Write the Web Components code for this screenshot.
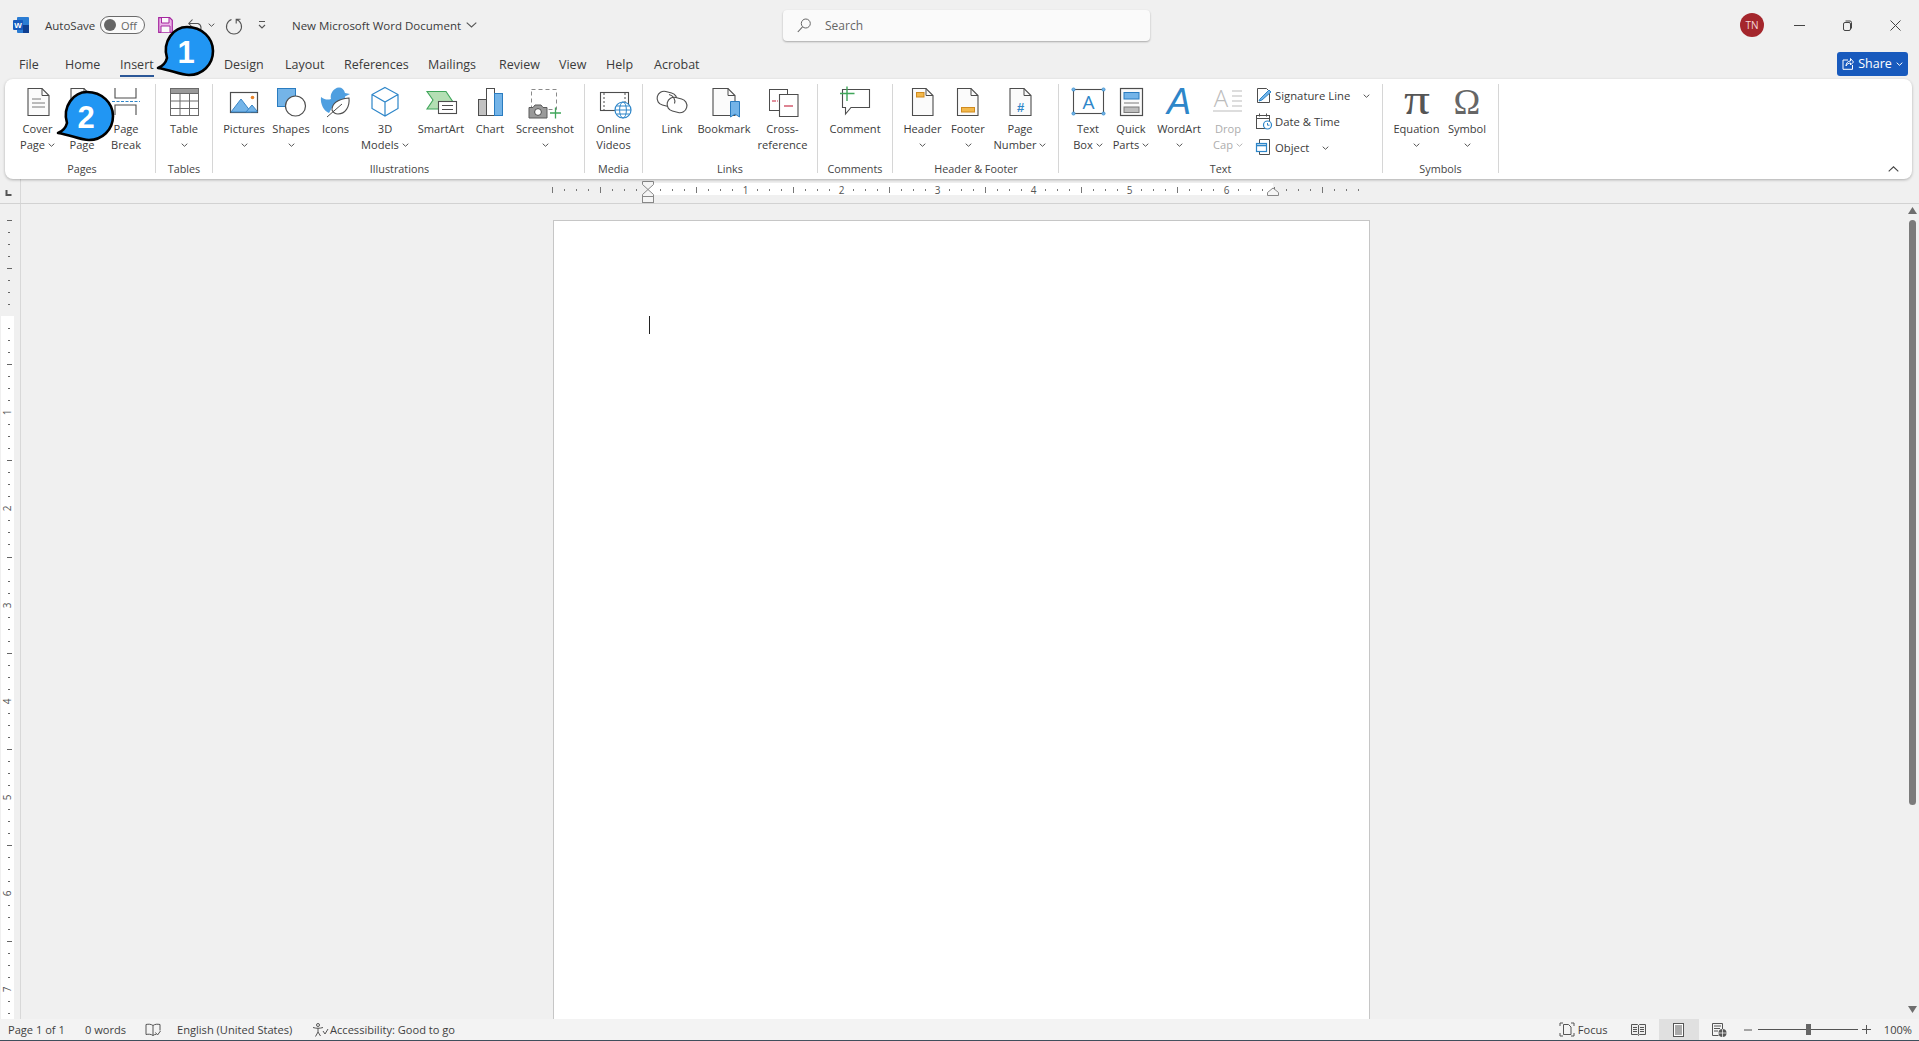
<!DOCTYPE html>
<html lang="en">
<head>
<meta charset="utf-8">
<title>New Microsoft Word Document</title>
<style>
  html, body { margin: 0; height: 100%; overflow: hidden; background: #f0f0f0; }
  body { font-family: "Open Sans", "Liberation Sans", sans-serif; color: #3b3b3b; }
</style>
</head>
<body>
<word-app>
  <title-bar></title-bar>
  <tab-strip></tab-strip>
  <ribbon-bar>
    <ribbon-group label="Pages" pad="10 7" shift="4">
      <ribbon-button w="45" icon="cover" label="Cover|Page" arrow></ribbon-button>
      <ribbon-button w="44" icon="blank" label=" |Page"></ribbon-button>
      <ribbon-button w="44" icon="pagebreak" label="Page|Break"></ribbon-button>
    </ribbon-group>
    <ribbon-group label="Tables" pad="0 0">
      <ribbon-button w="56" icon="table" label="Table" arrow></ribbon-button>
    </ribbon-group>
    <ribbon-group label="Illustrations" pad="5 3" shift="2">
      <ribbon-button w="52" icon="pictures" label="Pictures" arrow></ribbon-button>
      <ribbon-button w="42" icon="shapes" label="Shapes" arrow></ribbon-button>
      <ribbon-button w="47" icon="icons" label="Icons"></ribbon-button>
      <ribbon-button w="52" icon="models" label="3D|Models" arrow></ribbon-button>
      <ribbon-button w="60" icon="smartart" label="SmartArt"></ribbon-button>
      <ribbon-button w="38" icon="chart" label="Chart"></ribbon-button>
      <ribbon-button w="72" icon="screenshot" label="Screenshot" arrow></ribbon-button>
    </ribbon-group>
    <ribbon-group label="Media" pad="0 0">
      <ribbon-button w="57" icon="video" label="Online|Videos"></ribbon-button>
    </ribbon-group>
    <ribbon-group label="Links" pad="1 0">
      <ribbon-button w="56" icon="link" label="Link"></ribbon-button>
      <ribbon-button w="48" icon="bookmark" label="Bookmark"></ribbon-button>
      <ribbon-button w="69" icon="crossref" label="Cross-|reference"></ribbon-button>
    </ribbon-group>
    <ribbon-group label="Comments" pad="0 0">
      <ribbon-button w="74" icon="comment" label="Comment"></ribbon-button>
    </ribbon-group>
    <ribbon-group label="Header &amp; Footer" pad="1 3" shift="1">
      <ribbon-button w="57" icon="header" label="Header" arrow></ribbon-button>
      <ribbon-button w="34" icon="footer" label="Footer" arrow></ribbon-button>
      <ribbon-button w="70" icon="pagenum" label="Page|Number" arrow></ribbon-button>
    </ribbon-group>
    <ribbon-group label="Text" pad="2 0">
      <ribbon-button w="54" icon="textbox" label="Text|Box" arrow></ribbon-button>
      <ribbon-button w="32" icon="quickparts" label="Quick|Parts" arrow></ribbon-button>
      <ribbon-button w="64" icon="wordart" label="WordArt" arrow></ribbon-button>
      <ribbon-button w="34" icon="dropcap" label="Drop|Cap" arrow disabled></ribbon-button>
      <small-stack>
        <small-button icon="signature" label="Signature Line" arrow-at="88"></small-button>
        <small-button icon="datetime" label="Date &amp; Time"></small-button>
        <small-button icon="object" label="Object" arrow-at="47"></small-button>
      </small-stack>
    </ribbon-group>
    <ribbon-group label="Symbols" pad="7 7">
      <ribbon-button w="53" icon="equation" label="Equation" arrow></ribbon-button>
      <ribbon-button w="48" icon="symbol" label="Symbol" arrow></ribbon-button>
    </ribbon-group>
  </ribbon-bar>
  <h-ruler></h-ruler>
  <doc-area></doc-area>
  <status-bar></status-bar>
</word-app>
<callout-badge n="1" x="156" y="25"></callout-badge>
<callout-badge n="2" x="56" y="90"></callout-badge>

<script>
  const INK = "#4d4d4d";
  const BLUE = "#2e86c9";
  const SKY = "#74b4e8";
  const ORANGE = "#f2b84b";

  const doc = (x0, x1, y0 = 4.5, y1 = 31.5, fold = 7) =>
    `<path d="M${x0} ${y0}H${x1 - fold}L${x1} ${y0 + fold}V${y1}H${x0}Z" fill="#fbfbfb" stroke="${INK}" stroke-width="1.1"/>
     <path d="M${x1 - fold} ${y0}V${y0 + fold}H${x1}" fill="none" stroke="${INK}"/>`;

  // svg bodies for the large ribbon buttons, 44x37, x=22 is the button centre
  const ICONS = {
    cover: doc(12, 33) + `<path d="M16 15h9M16 19h13M16 23h13" stroke="#7a7a7a" fill="none"/>`,
    blank: doc(11, 31),
    pagebreak: `<path d="M11 4v10h21V4M11 31V21h21v10" fill="none" stroke="${INK}" stroke-width="1.1"/>
      <path d="M8 17.5h28" stroke="${BLUE}" stroke-dasharray="3 1.5" stroke-width="1.2"/>`,
    table: `<rect x="8.5" y="4.5" width="28" height="27" fill="#fff" stroke="#6a6a6a"/>
      <rect x="8.5" y="4.5" width="28" height="5" fill="#9a9a9a" stroke="#6a6a6a"/>
      <path d="M18 9.5v22M27.5 9.5v22M8.5 17h28M8.5 24.5h28" stroke="#6a6a6a" fill="none"/>`,
    pictures: `<rect x="8.5" y="8.5" width="27" height="20" fill="#fff" stroke="${INK}" stroke-width="1.2"/>
      <path d="M9 28L19 15L29 28Z" fill="${SKY}" stroke="#3a86c6"/><path d="M24 28L30 21L35 27V28Z" fill="${SKY}" stroke="#3a86c6"/>
      <circle cx="30.5" cy="13.5" r="1.8" fill="#e8832a"/>`,
    shapes: `<rect x="8.5" y="4.5" width="18" height="18" fill="${SKY}" stroke="#2a7cc0"/>
      <circle cx="26.5" cy="22" r="10" fill="#fff" stroke="${INK}" stroke-width="1.2"/>`,
    icons: `<path d="M7 13C11 16 14 16 17 15C16 11 18 7 21 5C25 2 30 4 31 9L36 10L31 12.500C31 16 30 19 27 21L19 22L15 29C10 27 6 20 7 13Z" fill="#4f9fe0"/>
      <path d="M18 26C18 19 25 15 35 14C36 23 31 30 24 30C21 30 19 28 18 26Z" fill="#fff" stroke="${INK}" stroke-width="1.1"/>
      <path d="M13 33L28 20" stroke="${INK}"/>`,
    models: `<path d="M22 3.500L35 10.500V24.500L22 32L9 24.500V10.500Z M9 10.500L22 18L35 10.500M22 18V32" fill="#fff" stroke="${BLUE}" stroke-width="1.2"/>`,
    smartart: `<path d="M8 7.500H27L34 18L27 25H8L14 16Z" fill="#b4dfb4" stroke="#3fa65a" stroke-width="1.1"/>
      <rect x="19.500" y="17.500" width="18" height="12" fill="#fff" stroke="${INK}" stroke-width="1.1"/>
      <path d="M23 21.500h11M23 25.500h11" stroke="${INK}"/>`,
    chart: `<rect x="10.500" y="15.500" width="8" height="16" fill="#c2c2c2" stroke="${INK}"/>
      <rect x="18.500" y="4.500" width="8" height="27" fill="#fff" stroke="${INK}"/>
      <rect x="26.500" y="9.500" width="8" height="22" fill="${SKY}" stroke="#2a7cc0"/>`,
    screenshot: `<rect x="8.500" y="5.500" width="25" height="20" fill="none" stroke="#8a8a8a" stroke-dasharray="4 3"/>
      <path d="M6 23.500h4l2-2.500h6l2 2.500h4v10.500H6Z" fill="#9a9a9a" stroke="#5a5a5a"/>
      <circle cx="15" cy="28" r="3.400" fill="#fff" stroke="#4a4a4a"/>
      <path d="M27 29h11M32.500 23.500v11" stroke="#3fa65a" stroke-width="1.300"/>`,
    video: `<rect x="8.500" y="8.500" width="28" height="18" fill="#fff" stroke="${INK}" stroke-width="1.100"/>
      <path d="M12 9v17M33 9v17" stroke="${INK}" stroke-dasharray="2 2"/>
      <circle cx="31" cy="26" r="8" fill="#fff" stroke="${BLUE}" stroke-width="1.200"/>
      <ellipse cx="31" cy="26" rx="3.400" ry="8" fill="none" stroke="${BLUE}"/><path d="M23 26h16M24.500 22h13M24.500 30h13" stroke="${BLUE}"/>`,
    link: `<rect x="7" y="8" width="20" height="14" rx="7" fill="none" stroke="${INK}" stroke-width="1.100" transform="rotate(14 17 15)"/>
      <rect x="17" y="14" width="20" height="14" rx="7" fill="#fff" stroke="${INK}" stroke-width="1.100" transform="rotate(14 27 21)"/>
      <path d="M19 10.500a7 7 0 0 1 5.500 9" fill="none" stroke="${INK}" stroke-width="1.100"/>`,
    bookmark: doc(11, 33) + `<path d="M28.500 17.500h9v15.500l-4.500-3-4.500 3Z" fill="${SKY}" stroke="#2a7cc0"/>`,
    crossref: `<rect x="8.500" y="5.500" width="18" height="21" fill="#fff" stroke="${INK}"/>
      <path d="M11 17h4" stroke="#c8324a" stroke-width="1.100"/>
      <path d="M18.500 10.500H37V32.500H18.500Z" fill="#fff" stroke="${INK}" stroke-width="1.100"/>
      <path d="M23 22h9" stroke="#c8324a" stroke-width="1.200"/><path d="M16 17h1" stroke="#c8324a"/>`,
    comment: `<path d="M9.500 5.500H36.500V23.500H18L12.500 30V23.500H9.500Z" fill="#fff" stroke="${INK}" stroke-width="1.100"/>
      <path d="M7 9.500h14.500M14 2.500v14.500" stroke="#3fa65a" stroke-width="1.400"/>`,
    header: doc(11.5, 32) + `<rect x="15.500" y="8.500" width="7.500" height="4.500" fill="${ORANGE}" stroke="#d08a1e"/>`,
    footer: doc(11.5, 32) + `<rect x="15.500" y="23.500" width="13" height="4.500" fill="${ORANGE}" stroke="#d08a1e"/>`,
    pagenum: doc(12, 33) + `<text x="22.500" y="28" text-anchor="middle" font-family="Liberation Sans" font-size="13" font-weight="700" fill="${BLUE}">#</text>`,
    textbox: `<rect x="7.500" y="5.500" width="30" height="24" fill="#fff" stroke="${INK}" stroke-width="1.100"/>
      ${[[7.5, 5.5], [37.5, 5.5], [7.5, 29.5], [37.5, 29.5]].map(([x, y]) => `<circle cx="${x}" cy="${y}" r="1.600" fill="${SKY}" stroke="${BLUE}" stroke-width=".7"/>`).join("")}
      <text x="22.500" y="25" text-anchor="middle" font-family="Open Sans" font-size="19" fill="${BLUE}">A</text>`,
    quickparts: `<rect x="11.500" y="4.500" width="22" height="27" fill="#fafafa" stroke="${INK}" stroke-width="1.200"/>
      <rect x="15" y="8.500" width="15" height="6.500" fill="${SKY}" stroke="#2a7cc0"/>
      <path d="M15 19h15" stroke="#7a7a7a"/><rect x="15" y="23" width="15" height="5.500" fill="#bdbdbd" stroke="#7a7a7a"/>`,
    wordart: `<text x="22" y="29.500" text-anchor="middle" font-family="Liberation Sans" font-style="italic" font-size="36" fill="${BLUE}">A</text>`,
    dropcap: `<text x="15" y="23" text-anchor="middle" font-family="Open Sans" font-weight="300" font-size="24" fill="#bcbcbc">A</text>
      <path d="M26 7h10M26 12h10M26 17h10M26 22h10M7 27h29" stroke="#bcbcbc" stroke-width="1.100"/>`,
    equation: `<text x="22" y="30" text-anchor="middle" font-family="Liberation Serif" font-size="44" textLength="26" lengthAdjust="spacingAndGlyphs" fill="#555">π</text>`,
    symbol: `<text x="22" y="30" text-anchor="middle" font-family="Liberation Serif" font-size="36" fill="#666">Ω</text>`,
  };

  // 18x18 icons of the small ribbon buttons
  const SMALL_ICONS = {
    signature: `<path d="M2.500 2.500h9l3 3v11h-12Z" fill="#fff" stroke="${INK}"/><path d="M5 13L14 4l2 2-9 8-3 1Z" fill="${SKY}" stroke="${BLUE}"/>`,
    datetime: `<rect x="1.500" y="3.500" width="13" height="13" fill="#fff" stroke="${INK}"/><path d="M1.500 6.500h13M4.500 1.500v3M11.500 1.500v3" stroke="${INK}"/><circle cx="12.500" cy="13" r="4" fill="#fff" stroke="${BLUE}" stroke-width="1.200"/><path d="M12.500 11v2.200h2" stroke="${BLUE}" fill="none"/>`,
    object: `<path d="M4.500 1.500h10v15h-10Z" fill="#fff" stroke="${INK}"/><rect x="1.500" y="5.500" width="10" height="8" fill="#fff" stroke="${BLUE}" stroke-width="1.200"/><path d="M1.500 7.500h10" stroke="${BLUE}" stroke-width="1.600"/>`,
  };

  const chevron = (color = "#555") =>
    `<svg width="7" height="4" viewBox="0 0 7 4" style="vertical-align:middle"><path d="M.7.7L3.500 3.300 6.300.7" fill="none" stroke="${color}" stroke-width="1"/></svg>`;

  class WordApp extends HTMLElement {
    constructor() {
      super();
      this.attachShadow({ mode: "open" }).innerHTML = `
        <style>:host { display: flex; flex-direction: column; width: 1919px; height: 1041px; background: #f0f0f0; }</style>
        <slot></slot>`;
    }
  }

  class TitleBar extends HTMLElement {
    constructor() {
      super();
      this.attachShadow({ mode: "open" }).innerHTML = `
        <style>
          :host { display: flex; align-items: center; height: 50px; flex: none; font-size: 11.5px; color: #3b3b3b; }
          .left { width: 783px; flex: none; display: flex; align-items: center; padding-left: 13px; box-sizing: border-box; }
          svg { display: block; flex: none; }
          .auto { margin-left: 16px; width: 48px; white-space: nowrap; }
          .toggle { margin-left: 7px; width: 45px; height: 18px; box-sizing: border-box; border: 1px solid #6a6a6a; border-radius: 9px; background: #fafafa; display: flex; align-items: center; padding-left: 3px; font-size: 11px; color: #666; gap: 5px; }
          .knob { width: 12px; height: 12px; border-radius: 50%; background: #666; }
          .doc { margin-left: 25px; width: 174px; white-space: nowrap; }
          .search { width: 367px; height: 31px; flex: none; box-sizing: border-box; background: #fafafa; border-radius: 4px; box-shadow: 0 1px 2px rgba(0,0,0,.3); display: flex; align-items: center; padding-left: 14px; gap: 14px; color: #666; font-size: 12px; }
          .right { flex: 1; display: flex; align-items: center; justify-content: flex-end; padding-right: 18px; }
          .avatar { width: 24px; height: 24px; border-radius: 50%; background: #a4262c; color: #f3d6d6; font-size: 10px; display: flex; align-items: center; justify-content: center; margin-right: 30px; }
        </style>
        <div class="left">
          <svg width="16" height="16" viewBox="0 0 16 16"><rect x="4" width="12" height="16" rx="1" fill="#2b7cd3"/><rect x="10" y="8" width="6" height="8" fill="#103f91"/><rect y="3" width="10" height="10" rx="1" fill="#185abd"/><text x="5" y="11" text-anchor="middle" font-family="Liberation Sans" font-weight="700" font-size="8" fill="#fff">W</text></svg>
          <span class="auto">AutoSave</span>
          <span class="toggle"><span class="knob"></span>Off</span>
          <svg style="margin-left:13px" width="15" height="16" viewBox="0 0 15 16"><path d="M.7.7h11l2.600 2.600v12H.7Z" fill="#eab4e6" stroke="#a5279f" stroke-width="1.200"/><path d="M3.500 1v5h7.500V1M3 15.300V9h9v6.300" fill="#fafafa" stroke="#a5279f"/></svg>
          <svg style="margin-left:15px" width="17" height="16" viewBox="0 0 17 16"><path d="M1 6.500h9a4.500 4.500 0 0 1 0 8.500H7M4.500 2.500L.8 6.500l3.700 4" fill="none" stroke="#555" stroke-width="1.100"/></svg>
          <span style="margin-left:3px;width:8px;display:flex">${chevron()}</span>
          <svg style="margin-left:9px;overflow:visible" width="16" height="17" viewBox="0 0 16 17"><path d="M4.500 1.500a7.500 7.500 0 1 0 5 0M4.800 5.500v-4.300h-4.300" transform="matrix(-1 0 0 1 16 1)" fill="none" stroke="#555" stroke-width="1.100"/></svg>
          <svg style="margin-left:16px" width="10" height="10" viewBox="0 0 10 10"><path d="M2 1.500h6M2 5l3 3 3-3" fill="none" stroke="#555" stroke-width="1.100"/></svg>
          <span class="doc">New Microsoft Word Document</span>
          <svg width="11" height="6" viewBox="0 0 11 6"><path d="M.7.7L5.500 5 10.300.7" fill="none" stroke="#555" stroke-width="1.100"/></svg>
        </div>
        <div class="search">
          <svg width="14" height="15" viewBox="0 0 14 15"><circle cx="8.800" cy="5.500" r="4.500" fill="none" stroke="#666"/><path d="M5.500 8.800L.8 14" stroke="#666" stroke-width="1.100"/></svg>
          <span>Search</span>
        </div>
        <div class="right">
          <span class="avatar">TN</span>
          <svg width="11" height="11" viewBox="0 0 11 11"><path d="M0 5.500h11" stroke="#444"/></svg>
          <svg style="margin-left:37px" width="11" height="11" viewBox="0 0 11 11"><rect x="1.500" y="2.500" width="7" height="8" rx="1.500" fill="none" stroke="#444"/><path d="M3.500 1h4.500a1.500 1.500 0 0 1 1.500 1.500v6" fill="none" stroke="#444"/></svg>
          <svg style="margin-left:37px" width="11" height="11" viewBox="0 0 11 11"><path d="M.5.500l10 10M10.500.500l-10 10" stroke="#444"/></svg>
        </div>`;
    }
  }

  const TABS = [
    ["File", 46], ["Home", 55], ["Insert", 104, true], ["Design", 61], ["Layout", 59], ["References", 84],
    ["Mailings", 71], ["Review", 60], ["View", 47], ["Help", 48], ["Acrobat", 60],
  ];

  class TabStrip extends HTMLElement {
    constructor() {
      super();
      const tabs = TABS.map(([name, w, on]) =>
        `<span class="tab${on ? " on" : ""}" style="width:${w}px"><b>${name}</b></span>`).join("");
      this.attachShadow({ mode: "open" }).innerHTML = `
        <style>
          :host { display: flex; align-items: center; height: 29px; flex: none; padding-left: 19px; font-size: 12.5px; color: #3b3b3b; position: relative; box-sizing: border-box; }
          .tab { flex: none; white-space: nowrap; }
          b { font-weight: 400; position: relative; display: inline-block; line-height: 29px; }
          .on b::after { content: ""; position: absolute; left: 0; right: 0; bottom: 2px; height: 2px; background: #2b5797; }
          .share { margin-left: auto; margin-right: 11px; width: 71px; height: 24px; margin-top: -2px; background: #185abd; border-radius: 3px; color: #fff; display: flex; align-items: center; justify-content: center; gap: 4px; }
          .share svg { flex: none; }
        </style>
        ${tabs}
        <span class="share">
          <svg width="12" height="13" viewBox="0 0 12 13"><path d="M6 3H1v9.300h9.500V8" fill="none" stroke="#fff"/><path d="M4 9c0-3 2-5 4.500-5V1.500L11.500 5 8.500 8V6C6.500 6 5 7 4 9Z" fill="none" stroke="#fff"/></svg>
          Share ${chevron("#fff")}
        </span>`;
    }
  }

  class RibbonBar extends HTMLElement {
    constructor() {
      super();
      this.attachShadow({ mode: "open" }).innerHTML = `
        <style>
          :host { display: flex; flex: none; height: 100px; margin: 0 7px 0 5px; padding-top: 5px; box-sizing: border-box; background: #fff; border-radius: 8px; box-shadow: 0 1px 3px rgba(0,0,0,.28); position: relative; z-index: 1; }
          .collapse { margin-left: auto; margin-right: 13px; align-self: flex-end; margin-bottom: 7px; }
        </style>
        <slot></slot>
        <svg class="collapse" width="11" height="6" viewBox="0 0 11 6"><path d="M.7 5.300L5.500 .8l4.800 4.500" fill="none" stroke="#444" stroke-width="1.100"/></svg>`;
    }
  }

  class RibbonGroup extends HTMLElement {
    constructor() {
      super();
      const [l, r] = (this.getAttribute("pad") || "0 0").split(" ");
      this.attachShadow({ mode: "open" }).innerHTML = `
        <style>
          :host { display: flex; flex-direction: column; flex: none; height: 89px; border-right: 1px solid #d6d6d6; box-sizing: content-box; }
          .body { display: flex; flex: 1; padding: 0 ${r}px 0 ${l}px; }
          .name { height: 12px; line-height: 12px; margin-bottom: -2px; padding-left: ${this.getAttribute("shift") || 0}px; text-align: center; font-size: 10.8px; color: #444; white-space: nowrap; }
        </style>
        <div class="body"><slot></slot></div>
        <div class="name"></div>`;
      this.shadowRoot.querySelector(".name").textContent = this.getAttribute("label");
    }
  }

  class RibbonButton extends HTMLElement {
    constructor() {
      super();
      const lines = this.getAttribute("label").split("|");
      const arrow = this.hasAttribute("arrow");
      const off = this.hasAttribute("disabled");
      const chev = chevron(off ? "#b5b5b5" : "#555");
      const rows = lines.map((t, i) =>
        `<div class="row">${t.trim() ? t : "&nbsp;"}${arrow && i === lines.length - 1 && lines.length > 1 ? " " + chev : ""}</div>`).join("");
      this.attachShadow({ mode: "open" }).innerHTML = `
        <style>
          :host { display: block; flex: none; width: ${this.getAttribute("w")}px; font-size: 11.1px; color: ${off ? "#adadad" : "#3b3b3b"}; }
          svg.ico { display: block; width: 44px; height: 37px; overflow: visible; position: relative; left: 50%; transform: translateX(-50%); margin: 0; }
          .row { height: 16px; line-height: 16px; text-align: center; white-space: nowrap; display: flex; justify-content: center; align-items: center; gap: 3px; }
          .row svg { flex: none; }
          .wrap { width: 100%; }
        </style>
        <svg class="ico" viewBox="0 0 44 37">${ICONS[this.getAttribute("icon")]}</svg>
        <div class="wrap">${rows}${arrow && lines.length === 1 ? `<div class="row">${chev}</div>` : ""}</div>`;
    }
  }

  class SmallStack extends HTMLElement {
    constructor() {
      super();
      this.attachShadow({ mode: "open" }).innerHTML = `
        <style>:host { display: flex; flex-direction: column; flex: none; width: 127px; margin: -2px 0 0 10px; }</style>
        <slot></slot>`;
    }
  }

  class SmallButton extends HTMLElement {
    constructor() {
      super();
      const at = this.getAttribute("arrow-at");
      this.attachShadow({ mode: "open" }).innerHTML = `
        <style>
          :host { display: flex; align-items: center; height: 26px; font-size: 11.3px; color: #3b3b3b; white-space: nowrap; }
          svg.ico { flex: none; width: 18px; height: 18px; margin-right: 2px; }
          .t { display: inline-block; }
        </style>
        <svg class="ico" viewBox="0 0 18 18">${SMALL_ICONS[this.getAttribute("icon")]}</svg>
        <span class="t"></span>
        ${at ? `<span style="position:absolute;margin-left:${+at + 20}px">${chevron()}</span>` : ""}`;
      this.shadowRoot.querySelector(".t").textContent = this.getAttribute("label");
    }
  }

  class HRuler extends HTMLElement {
    constructor() {
      super();
      const zero = 648.3, inch = 96.2;
      let marks = "";
      for (let n = -8; n <= 59; n++) {
        const x = Math.round(zero + (n * inch) / 8) + 0.5;
        if (n === 0) continue;
        if (n % 8 === 0 && n > 0 && n < 56) marks += `<text x="${x}" y="194" text-anchor="middle">${n / 8}</text>`;
        else if (n % 4 === 0) marks += `<path d="M${x} 187v6" stroke="#777"/>`;
        else marks += `<path d="M${x} 189v2" stroke="#777"/>`;
      }
      this.attachShadow({ mode: "open" }).innerHTML = `
        <style>
          :host { display: block; flex: none; height: 25px; border-bottom: 1px solid #d2d2d2; box-sizing: border-box; }
          svg { display: block; }
          text { font: 10px "Open Sans", sans-serif; fill: #555; }
        </style>
        <svg width="1919" height="24" viewBox="0 179 1919 24">
          <rect x="648" y="183" width="625" height="12" fill="#fff"/>
          ${marks}
          <path d="M6.500 190v5h5" fill="none" stroke="#555" stroke-width="2"/>
          <path d="M20.500 179v24" stroke="#d8d8d8"/>
          <path d="M642.500 181.500h11v3l-5.500 5-5.500-5ZM642.500 196.500v-2l5.500-5 5.500 5v2Z" fill="#f5f5f5" stroke="#888"/>
          <rect x="642.500" y="196.500" width="11" height="6" fill="#f5f5f5" stroke="#888"/>
          <path d="M1267.500 195.500v-3l5.500-4.500 5.500 4.500v3Z" fill="#f5f5f5" stroke="#888"/>
        </svg>`;
    }
  }

  class VRuler extends HTMLElement {
    constructor() {
      super();
      const zero = 316, inch = 96.2;
      let marks = "";
      for (let n = -8; n <= 58; n++) {
        const y = Math.round(zero + (n * inch) / 8) + 0.5 - 204;
        if (n === 0) continue;
        if (n % 8 === 0 && n > 0) marks += `<text x="0" y="0" transform="translate(11 ${y}) rotate(-90)" text-anchor="middle">${n / 8}</text>`;
        else if (n % 4 === 0) marks += `<path d="M7 ${y}h5" stroke="#666"/>`;
        else marks += `<path d="M8 ${y}h2" stroke="#666"/>`;
      }
      this.attachShadow({ mode: "open" }).innerHTML = `
        <style>
          :host { display: block; flex: none; width: 21px; border-right: 1px solid #d8d8d8; box-sizing: border-box; overflow: hidden; }
          svg { display: block; }
          text { font: 10px "Open Sans", sans-serif; fill: #555; }
        </style>
        <svg width="20" height="815">
          <rect x="1" y="112" width="13" height="703" fill="#fff"/>
          ${marks}
        </svg>`;
    }
  }

  class DocArea extends HTMLElement {
    constructor() {
      super();
      this.attachShadow({ mode: "open" }).innerHTML = `
        <style>
          :host { display: flex; flex: 1; min-height: 0; }
          .canvas { flex: 1; display: flex; justify-content: center; padding: 16px 0 0 0; overflow: hidden; box-sizing: border-box; }
          .shift { margin-left: -4px; width: 817px; flex: none; }
          doc-page { display: block; }
        </style>
        <v-ruler></v-ruler>
        <div class="canvas"><div class="shift"><doc-page></doc-page></div></div>
        <v-scrollbar></v-scrollbar>`;
    }
  }

  class DocPage extends HTMLElement {
    constructor() {
      super();
      this.attachShadow({ mode: "open" }).innerHTML = `
        <style>
          :host { display: block; height: 900px; box-sizing: border-box; background: #fff; border: 1px solid #c6c6c6; padding: 95px 0 0 95px; }
          .caret { width: 1px; height: 18px; background: #222; }
        </style>
        <div class="caret"></div>`;
    }
  }

  class VScrollbar extends HTMLElement {
    constructor() {
      super();
      this.attachShadow({ mode: "open" }).innerHTML = `
        <style>
          :host { display: flex; flex-direction: column; align-items: center; flex: none; width: 14px; padding-top: 3px; box-sizing: border-box; }
          .thumb { width: 7px; height: 585px; border-radius: 4px; background: #7b7b7b; margin-top: 6px; }
          svg { display: block; flex: none; }
          .down { margin-top: auto; margin-bottom: 6px; }
        </style>
        <svg width="9" height="7" viewBox="0 0 9 7"><path d="M0 7L4.500 0 9 7Z" fill="#6e6e6e"/></svg>
        <div class="thumb"></div>
        <svg class="down" width="9" height="7" viewBox="0 0 9 7"><path d="M0 0L4.500 7 9 0Z" fill="#6e6e6e"/></svg>`;
    }
  }

  class StatusBar extends HTMLElement {
    constructor() {
      super();
      const S = "#555";
      this.attachShadow({ mode: "open" }).innerHTML = `
        <style>
          :host { display: flex; align-items: center; flex: none; height: 22px; box-sizing: border-box; border-bottom: 1px solid #3f4f5c; background: #f3f3f3; font-size: 11.1px; color: #3f3f3f; white-space: nowrap; padding-left: 8px; }
          span { flex: none; }
          svg { flex: none; display: block; }
          .view { width: 40px; height: 21px; background: #e0e0e0; display: flex; align-items: center; justify-content: center; flex: none; }
          .slider { width: 100px; height: 1px; background: #555; position: relative; margin-left: 6px; }
          .slider i { position: absolute; left: 48px; top: -5px; width: 5px; height: 11px; background: #666; }
        </style>
        <span style="width:77px">Page 1 of 1</span>
        <span style="width:60px">0 words</span>
        <svg width="16" height="14" viewBox="0 0 16 14"><path d="M8 2.500C6 1 3.500 1 1 1.500v10c2.500-.5 5-.5 7 1 1-.8 2-1.100 3-1.200M8 2.500c2-1.500 4.500-1.500 7-1v6M8 2.500v10" fill="none" stroke="${S}"/><path d="M10.500 9.500l2 2.500 3-4" fill="none" stroke="${S}"/></svg>
        <span style="margin-left:16px;width:135px">English (United States)</span>
        <svg style="margin-right:1px" width="17" height="14" viewBox="0 0 17 14"><circle cx="6" cy="2" r="1.500" fill="none" stroke="${S}"/><path d="M1 4.500c3 1 7 1 10 0M6 5v4L3.500 13.500M6 9l2.500 4M11 8l2 3 3-5" fill="none" stroke="${S}"/></svg>
        <span>Accessibility: Good to go</span>
        <span style="margin-left:auto;display:flex;align-items:center">
          <svg width="16" height="15" viewBox="0 0 16 15"><path d="M1 4V1h3M12 1h3v3M1 11v3h3M12 14h3v-3" fill="none" stroke="${S}"/><path d="M4.500 2.500h5l2.500 2.500v7.500h-7.500Z" fill="none" stroke="${S}"/></svg>
          <span style="margin-left:3px;width:53px">Focus</span>
          <svg width="15" height="13" viewBox="0 0 15 13"><path d="M.5 1.500h6l1 1 1-1h6v10h-6l-1 1-1-1h-6ZM7.500 2.500v9" fill="#eee" stroke="${S}"/><path d="M2 4.500h4M2 6.500h4M2 8.500h4M9 4.500h4M9 6.500h4M9 8.500h4" stroke="${S}"/></svg>
          <span class="view" style="margin-left:13px"><svg width="11" height="14" viewBox="0 0 11 14"><rect x=".5" y=".5" width="10" height="13" fill="#fff" stroke="${S}"/><path d="M2 3h7M2 5h7M2 7h7M2 9h7M2 11h7" stroke="${S}"/></svg></span>
          <svg style="margin-left:13px" width="15" height="14" viewBox="0 0 15 14"><path d="M.5.500h10v7M.5.500v12h6" fill="none" stroke="${S}"/><path d="M2 3h7M2 5.500h6M2 8h4" stroke="${S}"/><circle cx="10.500" cy="10" r="4" fill="#555"/><path d="M6.500 10h8M10.500 6v8" stroke="#fff" stroke-width=".7"/></svg>
          <svg style="margin-left:17px" width="8" height="8" viewBox="0 0 8 8"><path d="M0 4h8" stroke="${S}"/></svg>
          <span class="slider"><i></i></span>
          <svg style="margin-left:4px" width="9" height="9" viewBox="0 0 9 9"><path d="M0 4.500h9M4.500 0v9" stroke="${S}"/></svg>
          <span style="margin-left:13px;margin-right:7px">100%</span>
        </span>`;
    }
  }

  // numbered callouts lie over the ribbon, placed by their x and y
  class CalloutBadge extends HTMLElement {
    constructor() {
      super();
      this.attachShadow({ mode: "open" }).innerHTML = `
        <style>
          :host { position: absolute; left: ${this.getAttribute("x")}px; top: ${this.getAttribute("y")}px; width: 60px; height: 53px; z-index: 5; }
          svg { display: block; overflow: visible; }
          text { font: 700 31px "Liberation Sans", sans-serif; fill: #fff; }
        </style>
        <svg width="60" height="53" viewBox="0 0 60 53">
          <path d="M2 43C7 41 10 37 11 33C6 16 18 2 31 2C46 2 57 13 57 26C57 40 46 50 33 50C24 50 15 45 2 43Z" fill="#2196f3" stroke="#000" stroke-width="2.600" stroke-linejoin="round"/>
          <text x="30" y="38" text-anchor="middle">${this.getAttribute("n")}</text>
        </svg>`;
    }
  }

  customElements.define("v-ruler", VRuler);
  customElements.define("v-scrollbar", VScrollbar);
  customElements.define("doc-page", DocPage);
  customElements.define("doc-area", DocArea);
  customElements.define("word-app", WordApp);
  customElements.define("title-bar", TitleBar);
  customElements.define("tab-strip", TabStrip);
  customElements.define("ribbon-bar", RibbonBar);
  customElements.define("ribbon-group", RibbonGroup);
  customElements.define("ribbon-button", RibbonButton);
  customElements.define("small-stack", SmallStack);
  customElements.define("small-button", SmallButton);
  customElements.define("h-ruler", HRuler);
  customElements.define("status-bar", StatusBar);
  customElements.define("callout-badge", CalloutBadge);
</script>
</body>
</html>
